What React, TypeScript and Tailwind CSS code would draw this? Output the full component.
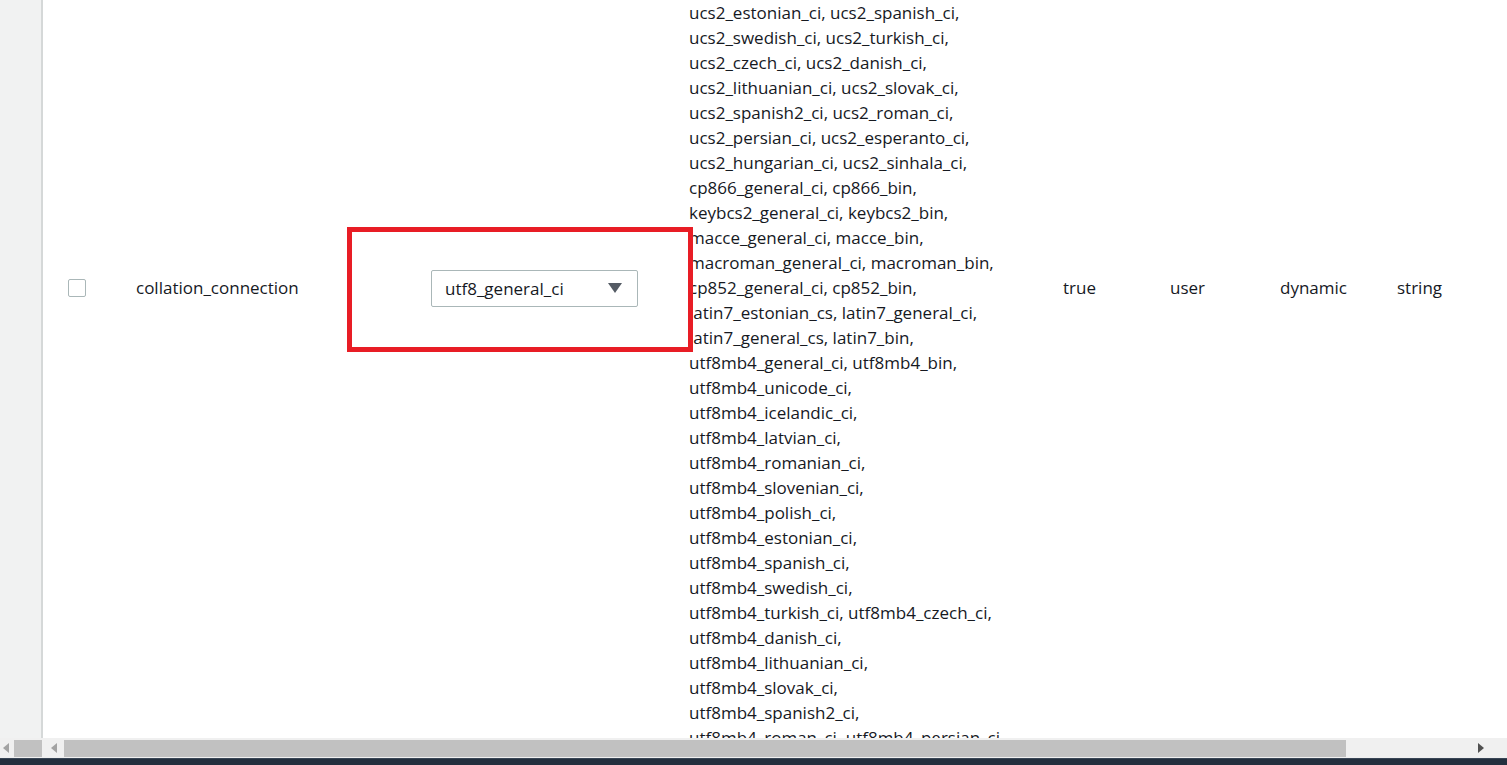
const hiddenAbove = [
  "latin5_turkish_ci, latin5_bin, armscii8_general_ci,",
  "armscii8_bin, utf8_general_ci, utf8_bin,",
  "utf8_unicode_ci, utf8_icelandic_ci,",
  "utf8_latvian_ci, utf8_romanian_ci,",
  "utf8_slovenian_ci, utf8_polish_ci,",
  "utf8_estonian_ci, utf8_spanish_ci,",
  "ucs2_general_ci, ucs2_bin,",
  "ucs2_unicode_ci, ucs2_icelandic_ci,",
  "ucs2_latvian_ci, ucs2_romanian_ci,",
  "ucs2_slovenian_ci, ucs2_polish_ci,",
];

const visible = [
  "ucs2_estonian_ci, ucs2_spanish_ci,",
  "ucs2_swedish_ci, ucs2_turkish_ci,",
  "ucs2_czech_ci, ucs2_danish_ci,",
  "ucs2_lithuanian_ci, ucs2_slovak_ci,",
  "ucs2_spanish2_ci, ucs2_roman_ci,",
  "ucs2_persian_ci, ucs2_esperanto_ci,",
  "ucs2_hungarian_ci, ucs2_sinhala_ci,",
  "cp866_general_ci, cp866_bin,",
  "keybcs2_general_ci, keybcs2_bin,",
  "macce_general_ci, macce_bin,",
  "macroman_general_ci, macroman_bin,",
  "cp852_general_ci, cp852_bin,",
  "latin7_estonian_cs, latin7_general_ci,",
  "latin7_general_cs, latin7_bin,",
  "utf8mb4_general_ci, utf8mb4_bin,",
  "utf8mb4_unicode_ci,",
  "utf8mb4_icelandic_ci,",
  "utf8mb4_latvian_ci,",
  "utf8mb4_romanian_ci,",
  "utf8mb4_slovenian_ci,",
  "utf8mb4_polish_ci,",
  "utf8mb4_estonian_ci,",
  "utf8mb4_spanish_ci,",
  "utf8mb4_swedish_ci,",
  "utf8mb4_turkish_ci, utf8mb4_czech_ci,",
  "utf8mb4_danish_ci,",
  "utf8mb4_lithuanian_ci,",
  "utf8mb4_slovak_ci,",
  "utf8mb4_spanish2_ci,",
  "utf8mb4_roman_ci, utf8mb4_persian_ci,",
  "utf8mb4_esperanto_ci,",
  "utf8mb4_hungarian_ci,",
  "utf8mb4_sinhala_ci,",
];

const lines = [...hiddenAbove, ...visible];

function ScrollArrow({ dir }: { dir: "left" | "right" }) {
  return (
    <svg width="6" height="10" viewBox="0 0 6 10" className="shrink-0">
      {dir === "left" ? (
        <path d="M6 0 L0 5 L6 10 Z" fill="#a3a3a3" />
      ) : (
        <path d="M0 0 L6 5 L0 10 Z" fill="#505050" />
      )}
    </svg>
  );
}

export default function App() {
  return (
    <div
      className="h-screen w-full flex flex-col overflow-hidden bg-white text-[#16191f]"
      style={{ fontFamily: '"Open Sans", "Noto Sans", sans-serif' }}
    >
      <div className="flex flex-1 min-h-0">
        <div className="w-[43px] shrink-0 bg-[#f1f2f2] border-r-2 border-[#d5d8d8]" />
        <div className="relative flex-1 overflow-hidden">
          <div className="flex items-center -mt-[250px] text-[17px] leading-[25px]">
            <div className="w-[93px] shrink-0 pl-[25px]">
              <div className="w-[18px] h-[18px] rounded-[2px] border border-[#aab7b8] bg-white" />
            </div>
            <div className="w-[295px] shrink-0">collation_connection</div>
            <div className="w-[258px] shrink-0">
              <div className="w-[207px] h-[37px] mt-[1px] flex items-center justify-between pl-[13px] pr-[15px] rounded-[2px] border border-[#aab7b8] bg-white">
                <span>utf8_general_ci</span>
                <svg width="14" height="10" viewBox="0 0 14 10">
                  <path d="M0 0 H14 L7 10 Z" fill="#545b64" />
                </svg>
              </div>
            </div>
            <div className="w-[374px] shrink-0 whitespace-nowrap">
              {lines.map((l) => (
                <div key={l}>{l}</div>
              ))}
            </div>
            <div className="w-[107px] shrink-0">true</div>
            <div className="w-[110px] shrink-0">user</div>
            <div className="w-[117px] shrink-0">dynamic</div>
            <div className="flex-1">string</div>
          </div>
          <div className="absolute left-[304px] top-[227px] w-[346px] h-[125px] border-[5px] border-[#e81d25]" />
        </div>
      </div>
      <div className="h-[20px] shrink-0 flex items-center bg-[#f0f0f0]">
        <div className="w-[43px] shrink-0 flex items-center gap-[5px] pl-[3px] pr-[1px]">
          <ScrollArrow dir="left" />
          <div className="flex-1 h-[17px] bg-[#c1c1c1]" />
        </div>
        <div className="flex-1 flex items-center pl-[8px] pr-[23px]">
          <ScrollArrow dir="left" />
          <div className="ml-[7px] w-[1282px] h-[17px] bg-[#c1c1c1]" />
          <div className="flex-1" />
          <ScrollArrow dir="right" />
        </div>
      </div>
      <div className="h-[7px] shrink-0 bg-[#232f3e] border-t border-[#3a4656]" />
    </div>
  );
}
